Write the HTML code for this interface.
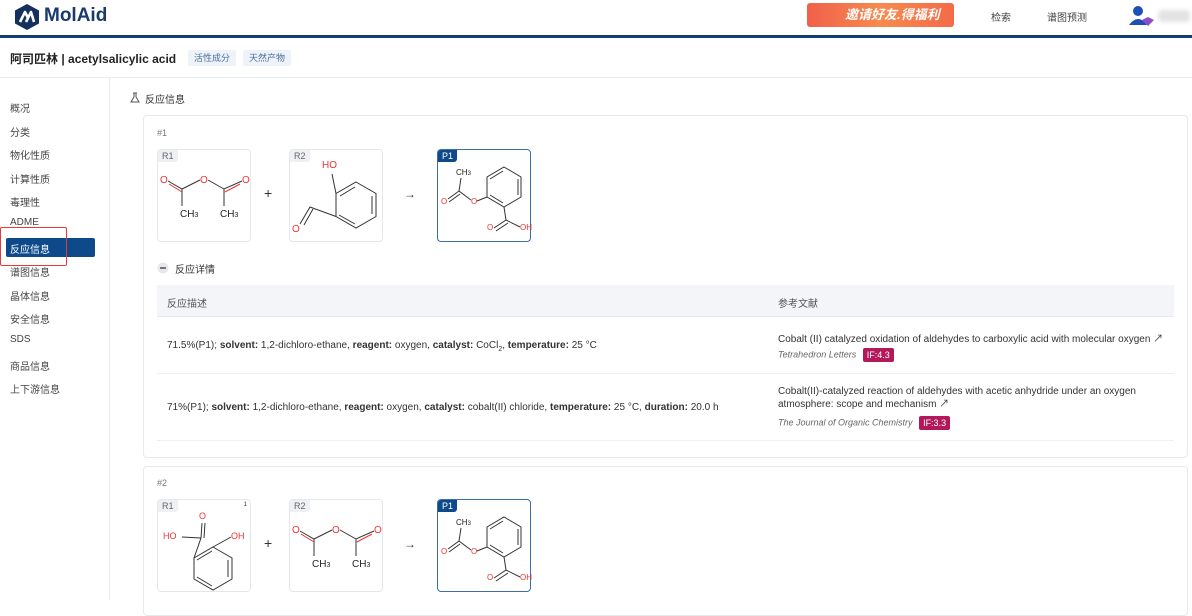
<!DOCTYPE html>
<html><head><meta charset="utf-8"><style>
*{margin:0;padding:0;box-sizing:border-box}
body{width:1192px;height:600px;overflow:hidden;background:#fff;font-family:"Liberation Sans","Noto Sans CJK SC",sans-serif;color:#333;position:relative}
.abs{position:absolute}
.hdr{left:0;top:0;width:1192px;height:35px;background:#fff}
.bline{left:0;top:35px;width:1192px;height:3px;background:#0f3f78}
.logo{left:14px;top:3px}
.logotxt{left:44px;top:5px;font-size:19px;font-weight:bold;color:#1a3a6e}
.promo{left:807px;top:3px;width:147px;height:24px;border-radius:3px;background:linear-gradient(90deg,#f0604a,#f78a4e,#f46a48);color:#fff;font-weight:bold;font-style:italic;font-size:13px;line-height:24px;padding-left:38px}
.nav{top:9px;font-size:10px;color:#444}
.title{left:10px;top:50px;font-size:12px;font-weight:bold;color:#222}
.tag{top:50px;height:16px;padding:0 6px;background:#eef3f9;color:#4d6d99;font-size:9px;line-height:16px;border-radius:2px}
.sep{left:0;top:77px;width:1192px;height:1px;background:#e8ebef}
.side{left:0;top:78px;width:110px;height:522px;border-right:1px solid #e8ebef;background:#fff}
.si{left:10px;font-size:10px;color:#444}
.act{left:6px;top:238px;width:89px;height:19px;background:#0e4a8a;border-radius:2px}
.red{left:0;top:227px;width:67px;height:39px;border:1.5px solid #e23b3b;border-radius:2px}
.card{left:143px;width:1045px;border:1px solid #e6e9ee;border-radius:4px;background:#fff}
.mol{width:94px;height:93px;border:1px solid #e4e7ec;border-radius:4px;background:#fff}
.mol.p{border:1px solid #3b6fa8}
.lbl{position:absolute;left:0;top:0;font-size:9px;padding:0 4px;height:12px;line-height:12px;background:#eef0f4;color:#666;border-radius:3px 0 3px 0}
.p .lbl{background:#0e4a8a;color:#fff}
svg text{font-family:"Liberation Sans",sans-serif}
.th{left:157px;top:285px;width:1017px;height:32px;background:#f3f5f9;border-bottom:1px solid #e6e9ee}
.row{font-size:10px;color:#333}
.if{display:inline-block;background:#b3195a;color:#fff;font-size:9px;padding:0 4px;height:14px;line-height:14px;border-radius:2px;font-style:normal;vertical-align:middle;margin-left:4px}
.jr{font-style:italic;color:#666;font-size:9px}
</style></head><body>
<div class="abs hdr"></div>
<svg class="abs logo" width="26" height="28" viewBox="0 0 26 28"><path d="M13 1 L25 7.5 V20.5 L13 27 L1 20.5 V7.5Z" fill="#14305c"/><path d="M6 19 L11 9 L14 15 M12 19 L17 9 L20 19" stroke="#fff" stroke-width="2.6" fill="none" stroke-linejoin="round"/></svg>
<div class="abs logotxt">MolAid</div>
<div class="abs promo">邀请好友.得福利</div>
<div class="abs nav" style="left:991px">检索</div>
<div class="abs nav" style="left:1047px">谱图预测</div>
<svg class="abs" style="left:1128px;top:5px" width="26" height="22"><circle cx="10" cy="6" r="5" fill="#1e4fb5"/><path d="M1 20 Q10 8 19 20Z" fill="#1e4fb5"/><path d="M14 15 L20 12 L26 15 L20 21Z" fill="#8a4fc7"/></svg>
<div class="abs" style="left:1158px;top:10px;width:32px;height:12px;background:#e3e3e3;border-radius:4px;filter:blur(2px)"></div>
<div class="abs bline"></div>
<div class="abs title">阿司匹林 | acetylsalicylic acid</div>
<div class="abs tag" style="left:188px">活性成分</div>
<div class="abs tag" style="left:243px">天然产物</div>
<div class="abs sep"></div>
<div class="abs side"></div>
<div class="abs act"></div>
<div class="abs si" style="top:100px">概况</div>
<div class="abs si" style="top:124px">分类</div>
<div class="abs si" style="top:147px">物化性质</div>
<div class="abs si" style="top:171px">计算性质</div>
<div class="abs si" style="top:194px">毒理性</div>
<div class="abs si" style="top:217px">ADME</div>
<div class="abs si" style="top:241px;color:#fff">反应信息</div>
<div class="abs si" style="top:264px">谱图信息</div>
<div class="abs si" style="top:288px">晶体信息</div>
<div class="abs si" style="top:311px">安全信息</div>
<div class="abs si" style="top:334px">SDS</div>
<div class="abs si" style="top:358px">商品信息</div>
<div class="abs si" style="top:381px">上下游信息</div>
<div class="abs red"></div>
<svg class="abs" style="left:130px;top:92px" width="10" height="11"><path d="M3 1 H7 M4 1 V5 L1 10 H9 L6 5 V1" stroke="#555" fill="none" stroke-width="1"/></svg>
<div class="abs" style="left:145px;top:91px;font-size:10px;color:#333">反应信息</div>

<div class="abs card" style="top:115px;height:343px"></div>
<div class="abs" style="left:157px;top:128px;font-size:9px;color:#777">#1</div>

<div class="abs mol" style="left:157px;top:149px"><span class="lbl">R1</span>
<svg width="94" height="93"><g stroke="#333" stroke-width="1" fill="none"><path d="M10 31 L24 39 L42 30 M50 30 L66 39 L84 31 M24 39 V56 M66 39 V56"/><path d="M11 34 L24 42 M67 42 L82 34" stroke="#e33"/></g>
<g font-size="10"><text x="2" y="33" fill="#e33">O</text><text x="42" y="33" fill="#e33">O</text><text x="84" y="33" fill="#e33">O</text><text x="22" y="67" fill="#222">CH<tspan font-size="7">3</tspan></text><text x="62" y="67" fill="#222">CH<tspan font-size="7">3</tspan></text></g></svg></div>
<div class="abs" style="left:264px;top:185px;font-size:14px;color:#333">+</div>
<div class="abs mol" style="left:289px;top:149px"><span class="lbl">R2</span>
<svg width="94" height="93"><g stroke="#333" stroke-width="1" fill="none"><path d="M66 32 L86 43.5 L86 66.5 L66 78 L46 66.5 L46 43.5Z"/><path d="M82 46 V64 M65 74 L49 65 M50 46 L65 37"/><path d="M46 43.5 L42 24 M46 66.5 L20 57 L10 74 M23 59 L14 75"/></g>
<g font-size="10" fill="#e33"><text x="32" y="18">HO</text><text x="2" y="82">O</text></g></svg></div>
<div class="abs" style="left:404px;top:187px;font-size:12px;color:#333">→</div>
<div class="abs mol p" style="left:437px;top:149px"><span class="lbl">P1</span>
<svg width="94" height="93"><g stroke="#333" stroke-width="1" fill="none"><path d="M66 17 L83 27 L83 47 L66 57 L49 47 L49 27Z"/><path d="M80 29 V45 M65 53 L52 45 M52 29 L65 21"/><path d="M49 47 L39 51 M33 50 L21 41 L23 28 M21 41 L10 49 M22 44 L11 52 M66 57 L68 70 L56 78 M70 73 L58 81 M68 70 L82 77"/></g>
<g font-size="8"><text x="18" y="25" fill="#222">CH<tspan font-size="6">3</tspan></text><text x="33" y="54" fill="#e33">O</text><text x="3" y="54" fill="#e33">O</text><text x="49" y="80" fill="#e33">O</text><text x="82" y="80" fill="#e33">OH</text></g></svg></div>

<svg class="abs" style="left:157px;top:262px" width="12" height="12"><circle cx="6" cy="6" r="5.5" fill="#e6e8ec"/><rect x="3" y="5.3" width="6" height="1.4" fill="#444"/></svg>
<div class="abs" style="left:175px;top:261px;font-size:10px;color:#333">反应详情</div>

<div class="abs th"></div>
<div class="abs" style="left:167px;top:295px;font-size:10px;color:#555">反应描述</div>
<div class="abs" style="left:778px;top:295px;font-size:10px;color:#555">参考文献</div>
<div class="abs" style="left:157px;top:373px;width:1017px;height:1px;background:#eceff3"></div>
<div class="abs" style="left:157px;top:440px;width:1017px;height:1px;background:#eceff3"></div>
<div class="abs row" style="left:167px;top:340px">71.5%(P1); <b>solvent:</b> 1,2-dichloro-ethane, <b>reagent:</b> oxygen, <b>catalyst:</b> CoCl<sub style="font-size:7px">2</sub>, <b>temperature:</b> 25 °C</div>
<div class="abs row" style="left:167px;top:402px">71%(P1); <b>solvent:</b> 1,2-dichloro-ethane, <b>reagent:</b> oxygen, <b>catalyst:</b> cobalt(II) chloride, <b>temperature:</b> 25 °C, <b>duration:</b> 20.0 h</div>
<div class="abs row" style="left:778px;top:330px">Cobalt (II) catalyzed oxidation of aldehydes to carboxylic acid with molecular oxygen ↗</div>
<div class="abs jr" style="left:778px;top:348px">Tetrahedron Letters <span class="if">IF:4.3</span></div>
<div class="abs row" style="left:778px;top:385px;width:380px;line-height:13px">Cobalt(II)-catalyzed reaction of aldehydes with acetic anhydride under an oxygen atmosphere: scope and mechanism ↗</div>
<div class="abs jr" style="left:778px;top:416px">The Journal of Organic Chemistry <span class="if">IF:3.3</span></div>

<div class="abs card" style="top:466px;height:150px"></div>
<div class="abs" style="left:157px;top:478px;font-size:9px;color:#777">#2</div>
<div class="abs mol" style="left:157px;top:499px"><span class="lbl">R1</span><span style="position:absolute;right:3px;top:2px;font-size:6px">1</span>
<svg width="94" height="93"><g stroke="#333" stroke-width="1" fill="none"><path d="M55 47 L74 58 L74 79 L55 90 L36 79 L36 58Z"/><path d="M70 60 V77 M54 86 L39 77 M39 60 L54 51"/><path d="M36 58 L43 38 L44 23 M46 38 L47 23 M43 38 L24 37 M55 47 L73 37"/></g>
<g font-size="9" fill="#e33"><text x="41" y="19">O</text><text x="5" y="39">HO</text><text x="73" y="39">OH</text></g></svg></div>
<div class="abs" style="left:264px;top:535px;font-size:14px;color:#333">+</div>
<div class="abs mol" style="left:289px;top:499px"><span class="lbl">R2</span>
<svg width="94" height="93"><g stroke="#333" stroke-width="1" fill="none"><path d="M10 31 L24 39 L42 30 M50 30 L66 39 L84 31 M24 39 V56 M66 39 V56"/><path d="M11 34 L24 42 M67 42 L82 34" stroke="#e33"/></g>
<g font-size="10"><text x="2" y="33" fill="#e33">O</text><text x="42" y="33" fill="#e33">O</text><text x="84" y="33" fill="#e33">O</text><text x="22" y="67" fill="#222">CH<tspan font-size="7">3</tspan></text><text x="62" y="67" fill="#222">CH<tspan font-size="7">3</tspan></text></g></svg></div>
<div class="abs" style="left:404px;top:537px;font-size:12px;color:#333">→</div>
<div class="abs mol p" style="left:437px;top:499px"><span class="lbl">P1</span>
<svg width="94" height="93"><g stroke="#333" stroke-width="1" fill="none"><path d="M66 17 L83 27 L83 47 L66 57 L49 47 L49 27Z"/><path d="M80 29 V45 M65 53 L52 45 M52 29 L65 21"/><path d="M49 47 L39 51 M33 50 L21 41 L23 28 M21 41 L10 49 M22 44 L11 52 M66 57 L68 70 L56 78 M70 73 L58 81 M68 70 L82 77"/></g>
<g font-size="8"><text x="18" y="25" fill="#222">CH<tspan font-size="6">3</tspan></text><text x="33" y="54" fill="#e33">O</text><text x="3" y="54" fill="#e33">O</text><text x="49" y="80" fill="#e33">O</text><text x="82" y="80" fill="#e33">OH</text></g></svg></div>
</body></html>
